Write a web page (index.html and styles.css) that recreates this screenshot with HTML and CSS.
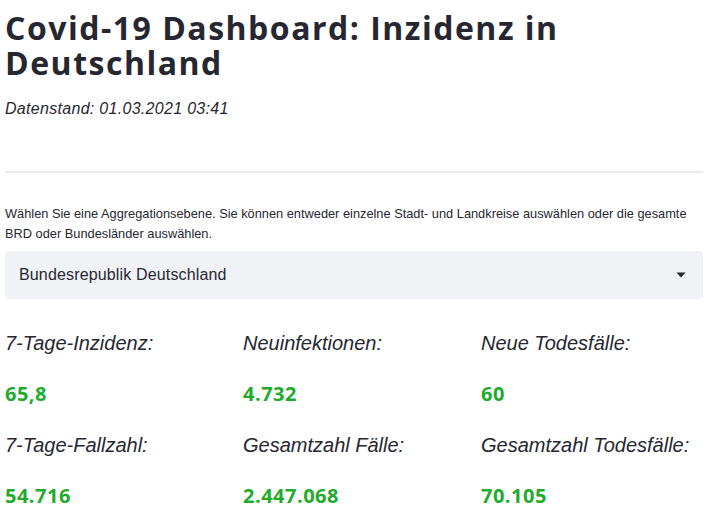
FILE: index.html
```html
<!DOCTYPE html>
<html lang="de">
<head>
<meta charset="utf-8">
<title>Covid-19 Dashboard</title>
<link rel="stylesheet" href="styles.css">
</head>
<body>
<main class="page">
  <h1 class="title">Covid-19 Dashboard: Inzidenz in Deutschland</h1>
  <p class="stand"><em>Datenstand: 01.03.2021 03:41</em></p>
  <hr class="divider">
  <p class="hint">Wählen Sie eine Aggregationsebene. Sie können entweder einzelne Stadt- und Landkreise auswählen oder die gesamte BRD oder Bundesländer auswählen.</p>
  <div class="select">
    <span class="select-value">Bundesrepublik Deutschland</span>
    <svg class="caret" width="10" height="6" viewBox="0 0 10 6"><path d="M0.5 0.5 H9.5 L5 5.5 Z" fill="#262730"/></svg>
  </div>
  <section class="metrics">
    <div class="metric"><h3 class="label">7-Tage-Inzidenz:</h3><div class="value">65,8</div></div>
    <div class="metric"><h3 class="label">Neuinfektionen:</h3><div class="value">4.732</div></div>
    <div class="metric"><h3 class="label">Neue Todesfälle:</h3><div class="value">60</div></div>
    <div class="metric"><h3 class="label">7-Tage-Fallzahl:</h3><div class="value">54.716</div></div>
    <div class="metric"><h3 class="label">Gesamtzahl Fälle:</h3><div class="value">2.447.068</div></div>
    <div class="metric"><h3 class="label">Gesamtzahl Todesfälle:</h3><div class="value">70.105</div></div>
  </section>
</main>
</body>
</html>
```

FILE: styles.css
```css
* { box-sizing: border-box; }
html, body { margin: 0; padding: 0; background: #ffffff; }
body {
  font-family: "Liberation Sans", Arial, sans-serif;
  color: #262730;
}
.page {
  width: 698px;
  margin-left: 5px;
}
.title {
  margin: 10px 0 0;
  font-family: "Open Sans", "Liberation Sans", sans-serif;
  font-size: 32px;
  line-height: 35px;
  font-weight: 700;
  letter-spacing: 1.5px;
}
.stand {
  margin: 17px 0 0;
  font-size: 16px;
  line-height: 24px;
  letter-spacing: 0.3px;
}
.divider {
  margin: 50px 0 0;
  border: 0;
  height: 2px;
  background: #ebebed;
}
.hint {
  margin: 31px 0 0;
  font-size: 12.8px;
  line-height: 20px;
}
.select {
  margin-top: 7px;
  height: 48px;
  background: #f0f2f6;
  border-radius: 4px;
  display: flex;
  align-items: center;
  justify-content: space-between;
  padding: 0 17px 0 14px;
  font-size: 16px;
}
.select-value { letter-spacing: 0.15px; }
.caret { display: block; }
.metrics {
  margin-top: 29px;
  display: grid;
  grid-template-columns: 222px 222px 222px;
  column-gap: 16px;
  row-gap: 21px;
}
.metric { display: flex; flex-direction: column; gap: 21px; }
.label {
  margin: 0;
  font-size: 20px;
  line-height: 30px;
  font-weight: 400;
  font-style: italic;
}
.value {
  font-family: "Open Sans", "Liberation Sans", sans-serif;
  font-size: 20px;
  line-height: 30px;
  font-weight: 700;
  letter-spacing: 0.5px;
  color: #21ab2c;
}
```
